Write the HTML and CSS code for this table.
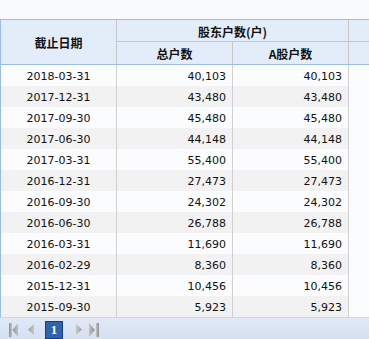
FILE: index.html
```html
<!DOCTYPE html>
<html>
<head>
<meta charset="utf-8">
<link rel="stylesheet" href="styles.css">
</head>
<body>
<div class="page">
  <div class="grid">
    <div class="hd c1 span2">截止日期</div>
    <div class="hd group">股东户数(户)</div>
    <div class="hd extra top"></div>
    <div class="hd c2 sub">总户数</div>
    <div class="hd c3 sub">A股户数</div>
    <div class="hd extra bottom"></div>
  </div>
  <div class="body" id="rows">
    <div class="row"><div class="c1">2018-03-31</div><div class="c2">40,103</div><div class="c3">40,103</div><div class="c4"></div></div>
    <div class="row"><div class="c1">2017-12-31</div><div class="c2">43,480</div><div class="c3">43,480</div><div class="c4"></div></div>
    <div class="row"><div class="c1">2017-09-30</div><div class="c2">45,480</div><div class="c3">45,480</div><div class="c4"></div></div>
    <div class="row"><div class="c1">2017-06-30</div><div class="c2">44,148</div><div class="c3">44,148</div><div class="c4"></div></div>
    <div class="row"><div class="c1">2017-03-31</div><div class="c2">55,400</div><div class="c3">55,400</div><div class="c4"></div></div>
    <div class="row"><div class="c1">2016-12-31</div><div class="c2">27,473</div><div class="c3">27,473</div><div class="c4"></div></div>
    <div class="row"><div class="c1">2016-09-30</div><div class="c2">24,302</div><div class="c3">24,302</div><div class="c4"></div></div>
    <div class="row"><div class="c1">2016-06-30</div><div class="c2">26,788</div><div class="c3">26,788</div><div class="c4"></div></div>
    <div class="row"><div class="c1">2016-03-31</div><div class="c2">11,690</div><div class="c3">11,690</div><div class="c4"></div></div>
    <div class="row"><div class="c1">2016-02-29</div><div class="c2">8,360</div><div class="c3">8,360</div><div class="c4"></div></div>
    <div class="row"><div class="c1">2015-12-31</div><div class="c2">10,456</div><div class="c3">10,456</div><div class="c4"></div></div>
    <div class="row"><div class="c1">2015-09-30</div><div class="c2">5,923</div><div class="c3">5,923</div><div class="c4"></div></div>
  </div>
  <div class="pager">
    <span class="pbtn first">
      <svg width="10" height="14" viewBox="0 0 10 14"><defs><linearGradient id="g1" x1="0" y1="0" x2="1" y2="0"><stop offset="0" stop-color="#8e8e8e"/><stop offset="1" stop-color="#c4c4c4"/></linearGradient></defs><rect x="0" y="0" width="3" height="14" fill="url(#g1)"/><path d="M9 0 L3.5 7 L9 14 Z" fill="url(#g1)"/></svg>
    </span>
    <span class="pbtn prev">
      <svg width="6" height="11" viewBox="0 0 6 11"><defs><linearGradient id="g2" x1="0" y1="0" x2="1" y2="0"><stop offset="0" stop-color="#9a9a9a"/><stop offset="1" stop-color="#c8c8c8"/></linearGradient></defs><path d="M6 0 L0 5.5 L6 11 Z" fill="url(#g2)"/></svg>
    </span>
    <span class="page-num">1</span>
    <span class="pbtn next">
      <svg width="6" height="11" viewBox="0 0 6 11"><defs><linearGradient id="g3" x1="0" y1="0" x2="1" y2="0"><stop offset="0" stop-color="#c8c8c8"/><stop offset="1" stop-color="#9a9a9a"/></linearGradient></defs><path d="M0 0 L6 5.5 L0 11 Z" fill="url(#g3)"/></svg>
    </span>
    <span class="pbtn last">
      <svg width="11" height="14" viewBox="0 0 11 14"><defs><linearGradient id="g4" x1="0" y1="0" x2="1" y2="0"><stop offset="0" stop-color="#c4c4c4"/><stop offset="1" stop-color="#8e8e8e"/></linearGradient></defs><path d="M0 0 L6 7 L0 14 Z" fill="url(#g4)"/><rect x="7" y="0" width="3" height="14" fill="url(#g4)"/></svg>
    </span>
  </div>
</div>
</body>
</html>
```

FILE: styles.css
```css
html, body {
  margin: 0;
  padding: 0;
  background: #f9fafd;
}
.page {
  width: 369px;
  height: 339px;
  overflow: hidden;
  padding-top: 19px;
  box-sizing: border-box;
  font-family: "DejaVu Sans", Verdana, sans-serif;
  font-size: 11px;
  color: #111;
}
.grid {
  display: grid;
  grid-template-columns: 117px 116px 116px 1fr;
  grid-template-rows: 22px 22px;
  border-top: 1px solid #9dbde8;
  border-bottom: 1px solid #9dbde8;
  background: #e3edf9;
}
.hd {
  box-sizing: border-box;
  display: flex;
  align-items: center;
  justify-content: center;
  font-family: "Noto Sans CJK SC", "Microsoft YaHei", sans-serif;
  font-weight: bold;
  font-size: 12px;
  color: #111;
  border-right: 1px solid #c6c6c6;
}
.span2 {
  grid-row: 1 / span 2;
  border-left: 1px solid #9dbde8;
  padding-top: 1px;
}
.group {
  grid-column: 2 / span 2;
  border-bottom: 1px solid #c6c6c6;
  padding-top: 1px;
}
.extra {
  border-right: none;
}
.extra.top {
  border-bottom: 1px solid #c6c6c6;
  border-left: none;
}
.extra.bottom {
  grid-column: 4;
}
.sub {
  padding-top: 1px;
}
.body {
  display: flex;
  flex-direction: column;
}
.row {
  display: grid;
  grid-template-columns: 117px 116px 116px 1fr;
  height: 21px;
  background: #fbfcfe;
}
.row:nth-child(even) {
  background: #f2f2f2;
}
.row > div {
  box-sizing: border-box;
  display: flex;
  align-items: center;
  border-right: 1px solid #d0d0d0;
  padding-top: 1px;
}
.row .c1 {
  justify-content: center;
  border-left: 1px solid #9dbde8;
}
.row .c2, .row .c3 {
  justify-content: flex-end;
  padding-right: 6px;
}
.row .c4 {
  border-right: none;
  background: #fbfcfe;
}
.pager {
  border-top: 1px solid #d6d6d6;
  height: 23px;
  background: linear-gradient(#e0e9f6, #d3e0f1);
  display: flex;
  align-items: center;
  padding-left: 9px;
  padding-top: 1px;
  box-sizing: border-box;
}
.pbtn {
  display: flex;
  align-items: center;
}
.pbtn svg {
  display: block;
}
.first { margin-right: 9px; }
.prev { margin-right: 11px; }
.page-num {
  width: 18px;
  height: 18px;
  box-sizing: border-box;
  background: #2f63ae;
  border: 1px solid #1b3c7c;
  color: #fff;
  font-family: "Liberation Serif", "Times New Roman", serif;
  font-weight: bold;
  font-size: 13px;
  display: flex;
  align-items: center;
  justify-content: center;
  margin-right: 13px;
}
.next { margin-right: 7px; }
```
